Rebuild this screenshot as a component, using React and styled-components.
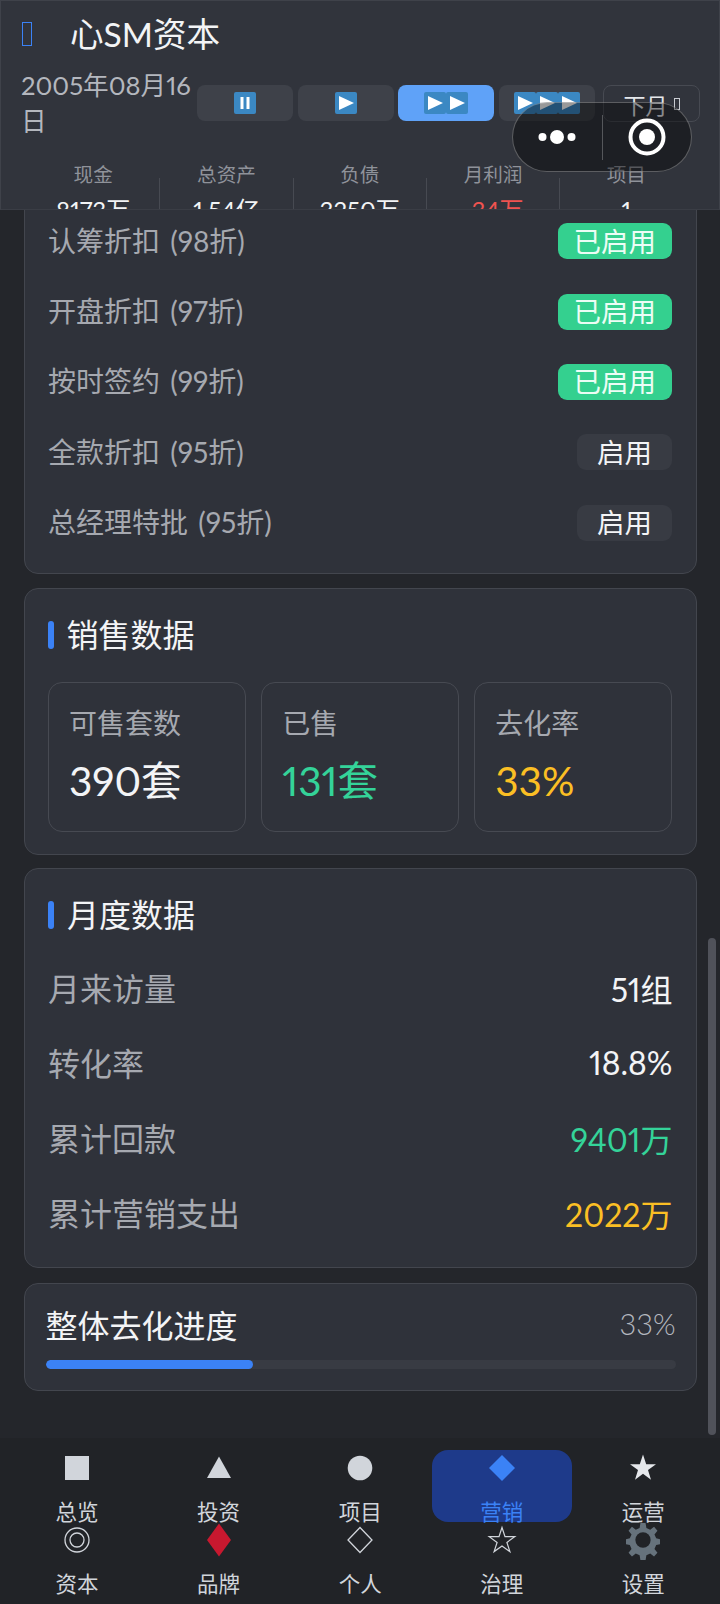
import React from 'react'
import styled, { createGlobalStyle } from 'styled-components'

const GlobalStyle = createGlobalStyle`
  html, body {
    margin: 0;
    padding: 0;
    background: #24262b;
  }
  * {
    box-sizing: border-box;
  }
`;

const Page = styled.div`
  position: relative;
  width: 720px;
  height: 1604px;
  display: flex;
  flex-direction: column;
  overflow: hidden;
  background: #24262b;
  color: #f3f4f6;
  font-family: Lato, "Noto Sans CJK SC", sans-serif;
  font-weight: 400;
  font-variant-numeric: proportional-nums;
`;

const Header = styled.header`
  flex: none;
  height: 210px;
  overflow: hidden;
  padding: 14px 18px 0 21px;
  background: #31343c;
  border: 1px solid #3f424a;
  border-bottom-color: #3a3d45;
`;
const TitleRow = styled.div`
  display: flex;
  align-items: center;
  height: 38px;
`;
const Tofu = styled.span`
  display: inline-block;
  flex: none;
  width: ${(props) => props.w}px;
  height: ${(props) => props.h}px;
  border: 1px solid ${(props) => props.color};
`;
const AppName = styled.h1`
  margin: 0 0 0 38px;
  font-size: 33.6px;
  font-weight: 400;
  line-height: 36px;
  color: #f3f4f6;
`;
const ControlRow = styled.div`
  display: flex;
  align-items: flex-start;
  margin-top: 14px;
`;
const DateText = styled.div`
  flex: none;
  width: 176px;
  margin-left: -1px;
  font-size: 25.6px;
  line-height: 36px;
  color: #b4b7be;
`;
const SpeedButtons = styled.div`
  display: flex;
  gap: 4.5px;
  margin-top: 18px;
`;
const SpeedButton = styled.div`
  width: 96px;
  height: 36px;
  display: flex;
  align-items: center;
  justify-content: center;
  border-radius: 8px;
  background: ${(props) => (props.active ? '#5fa2f8' : '#3e4149')};
`;
const NextButton = styled.div`
  flex: none;
  width: 97px;
  height: 37px;
  margin: 18px 0 0 8.5px;
  display: flex;
  align-items: center;
  justify-content: center;
  gap: 6px;
  border: 1px solid #474a52;
  border-radius: 8px;
  font-size: 22px;
  color: #e5e7eb;
`;
const Stats = styled.div`
  display: grid;
  grid-template-columns: repeat(5, 133.3px);
  margin: 39px 0 0 5px;
`;
const Stat = styled.div`
  height: 60px;
  display: flex;
  flex-direction: column;
  align-items: center;
  border-right: 1px solid ${(props) => (props.last ? 'transparent' : '#474a52')};
`;
const StatLabel = styled.div`
  margin-top: -17px;
  font-size: 19.6px;
  line-height: 28px;
  color: #8f929a;
`;
const StatValue = styled.div`
  font-size: 24px;
  line-height: 28px;
  margin-top: 7px;
  color: ${(props) => props.color || '#f3f4f6'};
`;

const Main = styled.main`
  flex: 1;
  min-height: 0;
  overflow: hidden;
  padding: 0 23.5px;
  display: flex;
  flex-direction: column;
  gap: 14.4px;
`;
const Card = styled.section`
  flex: none;
  background: #2f323a;
  border: 1.5px solid #43464e;
  border-radius: 14px;
`;
const DiscountCard = styled(Card)`
  margin-top: -40px;
  height: 403.6px;
  padding: 35px 23.5px 0 23.5px;
`;
const DiscountRow = styled.div`
  height: 70.4px;
  display: flex;
  align-items: center;
  justify-content: space-between;
`;
const RowLabel = styled.div`
  margin-bottom: 3px;
  font-size: ${(props) => props.size || 28}px;
  word-spacing: 3px;
  color: #a6a9b0;
`;
const Badge = styled.div`
  height: 36px;
  padding: 0 ${(props) => (props.on ? 16 : 20)}px 3px;
  display: flex;
  align-items: center;
  border-radius: 9px;
  font-size: 27.5px;
  color: ${(props) => (props.on ? '#ecfdf5' : '#f3f4f6')};
  background: ${(props) => (props.on ? '#34d08f' : '#383b43')};
`;
const SalesCard = styled(Card)`
  height: 267px;
  padding: 32px 23px 0 23px;
`;
const SectionTitle = styled.h2`
  display: flex;
  align-items: center;
  gap: 13px;
  height: 28px;
  margin: 0;
  font-size: 32px;
  font-weight: 400;
  line-height: 28px;
  color: #f3f4f6;
  &::before {
    content: '';
    width: 6px;
    height: 28px;
    border-radius: 3px;
    background: #3b82f6;
  }
`;
const Tiles = styled.div`
  display: grid;
  grid-template-columns: repeat(3, 1fr);
  gap: 14.4px;
  margin-top: 33px;
`;
const Tile = styled.div`
  height: 150px;
  padding: 21px 20.5px 0;
  border: 1.5px solid #474a52;
  border-radius: 14px;
`;
const TileLabel = styled.div`
  font-size: 28px;
  line-height: 38px;
  color: #a6a9b0;
`;
const TileValue = styled.div`
  margin-top: 10px;
  font-size: 40.5px;
  line-height: 58px;
  color: ${(props) => props.color};
`;
const MonthlyCard = styled(Card)`
  margin-top: -1px;
  height: 400px;
  padding: 32px 23px 0 23.5px;
`;
const MonthlyRows = styled.div`
  margin-top: 22px;
`;
const MonthlyRow = styled.div`
  height: 75px;
  display: flex;
  align-items: center;
  justify-content: space-between;
`;
const MonthlyValue = styled.div`
  margin-bottom: 2px;
  font-size: 32px;
  color: ${(props) => props.color};
`;
const ProgressCard = styled(Card)`
  height: 108.5px;
  padding: 19px 20px 0 21px;
`;
const ProgressHead = styled.div`
  display: flex;
  align-items: center;
  justify-content: space-between;
  height: 42px;
`;
const ProgressTitle = styled.div`
  font-size: 32px;
  color: #f3f4f6;
`;
const ProgressPercent = styled.div`
  font-size: 29px;
  font-weight: 300;
  color: #b4b7be;
`;
const ProgressTrack = styled.div`
  height: 9px;
  margin-top: 15.5px;
  border-radius: 5px;
  background: #383b43;
  overflow: hidden;
`;
const ProgressFill = styled.div`
  height: 100%;
  border-radius: 5px;
  background: #3b82f6;
`;
const Scrollbar = styled.div`
  position: absolute;
  top: 938px;
  right: 4px;
  width: 8px;
  height: 497px;
  border-radius: 4px;
  background: #50525a;
`;

const BottomNav = styled.nav`
  flex: none;
  height: 166px;
  padding: 12px 7px 0;
  display: grid;
  grid-template-columns: repeat(5, 140px);
  grid-auto-rows: 72px;
  column-gap: 1.6px;
  background: #212327;
`;
const NavItem = styled.div`
  height: 72px;
  display: flex;
  flex-direction: column;
  align-items: center;
  border-radius: 16px;
  background: ${(props) => (props.active ? '#1e3a8a' : 'transparent')};
`;
const NavIcon = styled.svg`
  flex: none;
  width: 40px;
  height: 40px;
  margin-top: -2px;
`;
const NavLabel = styled.div`
  margin-top: 8.5px;
  font-size: 21.5px;
  line-height: 30px;
  color: ${(props) => (props.active ? '#3b82f6' : '#d1d5db')};
`;

const Capsule = styled.div`
  position: absolute;
  top: 102px;
  left: 512px;
  width: 180px;
  height: 70px;
  display: flex;
  align-items: center;
  border: 1.5px solid rgba(255, 255, 255, 0.28);
  border-radius: 35px;
  background: rgba(0, 0, 0, 0.4);
`;
const CapsuleSide = styled.div`
  flex: 1;
  height: 45px;
  display: flex;
  align-items: center;
  justify-content: center;
  border-left: ${(props) => (props.divided ? '1.5px solid rgba(255, 255, 255, 0.25)' : 'none')};
`;

// emoji style keycap used on the speed buttons
const Keycap = ({ kind }) => (
  <svg width="22" height="22" viewBox="0 0 22 22">
    <rect width="22" height="22" rx="2" fill="#3b88c3" />
    {kind === 'pause' ? (
      <path d="M6.500 5h3v12h-3zM12.500 5h3v12h-3z" fill="#fff" />
    ) : (
      <path d="M4 4l15 7-15 7z" fill="#fff" />
    )}
  </svg>
);

const speeds = [
  { keys: ['pause'] },
  { keys: ['play'] },
  { keys: ['play', 'play'], active: true },
  { keys: ['play', 'play', 'play'] },
];

const stats = [
  { label: '现金', value: '8173万' },
  { label: '总资产', value: '1.54亿' },
  { label: '负债', value: '3250万' },
  { label: '月利润', value: '-34万', color: '#ef5350' },
  { label: '项目', value: '1' },
];

const discounts = [
  { label: '认筹折扣 (98折)', on: true },
  { label: '开盘折扣 (97折)', on: true },
  { label: '按时签约 (99折)', on: true },
  { label: '全款折扣 (95折)', on: false },
  { label: '总经理特批 (95折)', on: false },
];

const tiles = [
  { label: '可售套数', value: '390套', color: '#f3f4f6' },
  { label: '已售', value: '131套', color: '#34d399' },
  { label: '去化率', value: '33%', color: '#fbbf24' },
];

const monthly = [
  { label: '月来访量', value: '51组', color: '#f3f4f6' },
  { label: '转化率', value: '18.8%', color: '#f3f4f6' },
  { label: '累计回款', value: '9401万', color: '#34d399' },
  { label: '累计营销支出', value: '2022万', color: '#fbbf24' },
];

const light = '#d1d5db';

const navItems = [
  { label: '总览', shape: <rect x="8" y="8" width="24" height="24" fill={light} /> },
  { label: '投资', shape: <path d="M20 8.500L32 30H8z" fill={light} /> },
  { label: '项目', shape: <circle cx="20" cy="20" r="12.300" fill={light} /> },
  { label: '营销', active: true, shape: <path d="M20 7l13 13-13 13L7 20z" fill="#3b82f6" /> },
  { label: '运营', shape: <path d="M20 6.500l3.200 9.700H33l-8 5.900 3 9.700-8-6-8 6 3-9.700-8-5.900h9.800z" fill="#e5e7eb" /> },
  {
    label: '资本',
    shape: (
      <g fill="none" stroke={light} strokeWidth="1.300">
        <circle cx="20" cy="20" r="12" />
        <circle cx="20" cy="20" r="7" />
      </g>
    ),
  },
  { label: '品牌', shape: <path d="M20 3.500l12 16.500-12 16.500L8 20z" fill="#c8182f" /> },
  { label: '个人', shape: <path d="M20 7.500L32 20 20 32.500 8 20z" fill="none" stroke={light} strokeWidth="1.300" /> },
  {
    label: '治理',
    shape: (
      <path
        d="M20 7.500l3 9.200h9.800l-7.900 5.700 3 9.200-7.900-5.700-7.900 5.700 3-9.200-7.900-5.700H17z"
        fill="none"
        stroke={light}
        strokeWidth="1.200"
      />
    ),
  },
  {
    label: '设置',
    shape: (
      <g fill="#66727c" transform="translate(3 3) scale(0.85)">
        <path d="M17 0h6l1 6 4.500 2 4.500-3.500 4 4.500-3.500 4.500 2 4.500 4.500 1v6l-4.500 1-2 4.500 3.500 4.500-4 4.500-4.500-3.500-4.500 2-1 6h-6l-1-6-4.500-2-4.500 3.500-4-4.500 3.500-4.500-2-4.500-4.500-1v-6l4.500-1 2-4.500-3.500-4.500 4-4.500 4.500 3.500 4.500-2z" />
        <circle cx="20" cy="20" r="9" fill="#212327" />
      </g>
    ),
  },
];

export default function App() {
  return (
    <Page>
      <GlobalStyle />
      <Header>
        <TitleRow>
          <Tofu w={10} h={24} color="#3b82f6" />
          <AppName>心SM资本</AppName>
        </TitleRow>
        <ControlRow>
          <DateText>2005年08月16日</DateText>
          <SpeedButtons>
            {speeds.map((speed, i) => (
              <SpeedButton key={i} active={speed.active}>
                {speed.keys.map((key, k) => (
                  <Keycap key={k} kind={key} />
                ))}
              </SpeedButton>
            ))}
          </SpeedButtons>
          <NextButton>
            下月
            <Tofu w={6} h={12} color="#c9ccd2" />
          </NextButton>
        </ControlRow>
        <Stats>
          {stats.map((stat, i) => (
            <Stat key={stat.label} last={i === stats.length - 1}>
              <StatLabel>{stat.label}</StatLabel>
              <StatValue color={stat.color}>{stat.value}</StatValue>
            </Stat>
          ))}
        </Stats>
      </Header>

      <Main>
        <DiscountCard>
          {discounts.map((item) => (
            <DiscountRow key={item.label}>
              <RowLabel>{item.label}</RowLabel>
              <Badge on={item.on}>{item.on ? '已启用' : '启用'}</Badge>
            </DiscountRow>
          ))}
        </DiscountCard>

        <SalesCard>
          <SectionTitle>销售数据</SectionTitle>
          <Tiles>
            {tiles.map((tile) => (
              <Tile key={tile.label}>
                <TileLabel>{tile.label}</TileLabel>
                <TileValue color={tile.color}>{tile.value}</TileValue>
              </Tile>
            ))}
          </Tiles>
        </SalesCard>

        <MonthlyCard>
          <SectionTitle>月度数据</SectionTitle>
          <MonthlyRows>
            {monthly.map((row) => (
              <MonthlyRow key={row.label}>
                <RowLabel size={32}>{row.label}</RowLabel>
                <MonthlyValue color={row.color}>{row.value}</MonthlyValue>
              </MonthlyRow>
            ))}
          </MonthlyRows>
        </MonthlyCard>

        <ProgressCard>
          <ProgressHead>
            <ProgressTitle>整体去化进度</ProgressTitle>
            <ProgressPercent>33%</ProgressPercent>
          </ProgressHead>
          <ProgressTrack>
            <ProgressFill style={{ width: '33%' }} />
          </ProgressTrack>
        </ProgressCard>
      </Main>

      <BottomNav>
        {navItems.map((item) => (
          <NavItem key={item.label} active={item.active}>
            <NavIcon viewBox="0 0 40 40">{item.shape}</NavIcon>
            <NavLabel active={item.active}>{item.label}</NavLabel>
          </NavItem>
        ))}
      </BottomNav>

      <Scrollbar />
      <Capsule>
        <CapsuleSide>
          <svg width="40" height="14" viewBox="0 0 40 14">
            <circle cx="5.500" cy="7" r="4" fill="#fff" />
            <circle cx="20" cy="7" r="7" fill="#fff" />
            <circle cx="34.500" cy="7" r="4" fill="#fff" />
          </svg>
        </CapsuleSide>
        <CapsuleSide divided>
          <svg width="38" height="38" viewBox="0 0 38 38">
            <circle cx="19" cy="19" r="16.500" fill="none" stroke="#fff" strokeWidth="4" />
            <circle cx="19" cy="19" r="8" fill="#fff" />
          </svg>
        </CapsuleSide>
      </Capsule>
    </Page>
  )
}
